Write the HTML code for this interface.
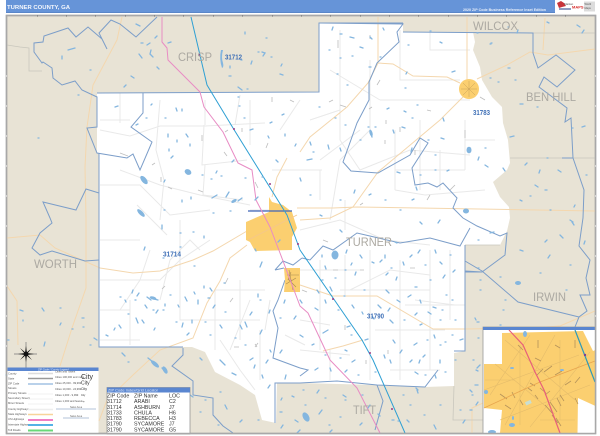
<!DOCTYPE html>
<html><head><meta charset="utf-8"><title>Turner County, GA</title>
<style>html,body{margin:0;padding:0;background:#fff;width:600px;height:436px;overflow:hidden}svg{display:block}text{font-family:"Liberation Sans",sans-serif}</style>
</head><body>
<svg width="600" height="436" viewBox="0 0 600 436" xmlns="http://www.w3.org/2000/svg">
<rect width="600" height="436" fill="#fff"/>
<!-- header -->
<rect x="6" y="0" width="549" height="12" fill="#6694d8"/>
<rect x="6" y="12" width="549" height="1" fill="#5a86c8"/>
<text x="7" y="8.8" font-size="5.6" font-weight="bold" fill="#f4f7fd" textLength="63" lengthAdjust="spacingAndGlyphs">TURNER COUNTY, GA</text>
<text x="463" y="10.8" font-size="3.6" font-weight="bold" fill="#e8effa" textLength="83" lengthAdjust="spacingAndGlyphs">2020 ZIP Code Business Reference Inset Edition</text>
<!-- logo -->
<path d="M557 3l4-2 3 2 2 3-4 1-3 1z" fill="#c8343a"/>
<path d="M559 8h12v2h-12z" fill="#8f9cc0"/>
<text x="564" y="5" font-size="3" fill="#555">Market</text>
<text x="572" y="8.6" font-size="4" font-weight="bold" fill="#d62b2b">MAPS</text>
<rect x="584" y="1.500" width="11" height="10" fill="#dcdcdc"/>
<text x="584.500" y="5" font-size="2.600" fill="#555">World</text>
<text x="584.500" y="9" font-size="2.600" fill="#555">Maps</text>
<!-- map bg -->
<rect x="6.500" y="15.500" width="589" height="418" fill="#e8e3d5" stroke="#a8a8a8" stroke-width="1.500"/>
<!-- county white -->
<path d="M97 93L319 92L319 23L403 23L403 32L473 32L475 42L473 50L480 67L482 80L492 97L502 107L503 123L508 140L510 163L507 170L493 182L500 197L509 207L510 218L507 231L500 245L465 245L465 351L454 353L454 386L425 387L377 385L300 383L277 383L276 423L262 420L255 395L240 385L215 372L205 352L192 347L99 347L99 153L97 153Z" fill="#fff"/>
<!-- minor roads -->
<g fill="none" stroke="#e9e9e9" stroke-width="1">
<path d="M100 130l30 6 30-10h45l60-3M160 100l-4 50 8 30-4 40M204 125l-2 40 45-5M205 165l-2 30 40 5M120 170l40 15 40 10 50 10M100 185h40l30 30 40-5M100 280h60l20-20 30-20M160 300l10-40 20-20 10 10M150 250l-10 30-20 30M180 260v60h40M215 290v60M215 290h50M240 280v60M250 300l-20 50M260 320h-50M220 340l20 30 15 20M260 330v50M100 340h40"/>
<path d="M340 30v110l20 30 50-20 60 5M370 60v70l-30 30-10 60M400 30v50h60M430 30v20h40M380 100h90M330 70l50 30M310 120l30-10M320 160l40-30M395 130v60M420 120v70M440 150v40M465 120v50M465 140h30M395 170h70M395 190l30 5 60-5M300 230l40-10 45 20 45 5M320 260v90M370 250v130M300 270h60M340 290h90M375 330h70M300 350l50 5M330 350v30M400 260v120M430 250v120M280 210h-30M272 170h50M320 170v30M345 200v30M350 290l40-20 40 5M405 305h60M390 370h50"/>
<path d="M100 120h30M120 93v30M137 205l30 30M100 240h40M130 300v45M180 220v40M270 300l-5 30M285 335l20 10M300 320l30 5M345 255v40M450 250v70M415 300l40 5M100 310h30M205 100v25M250 100v45M300 100l-20 30M240 95l-5 30"/>
</g>
<g fill="none" stroke="#bdbdbd" stroke-width="0.800">
<path d="M120 153l8 3M152 165l3-2M225 132l3-2M224 152l3 4M202 135v6M161 177v5M168 187l4 2M198 190l5 2M242 128v4M272 97v5M290 100l4 2M268 143l-2 5M255 182l3 6M338 40v8M370 35v4M380 80l-3 5M340 105l6 2M333 100l-4 2M372 107l-3 2M400 127v5M385 140v4M386 120v4M415 150v5M465 130v8M427 110l4 1M455 185l-5 5M480 97l5 3M430 195l-3 5M323 240l5 2M333 270h5M360 270h4M345 325v5M366 360v4M388 350v4M258 343l-3 4M234 347h5M162 289l3-3M225 284l3-6M230 302l3-4M255 344l2 3M302 290l5 2M360 205l3-2M410 268h5"/>
</g>
<!-- highways -->
<g fill="none" stroke="#f4d7ae" stroke-width="1">
<path d="M122 17L117 40L93 85L87 127L85 167L86 218L86 261L86 288L72 328L60 366"/>
<path d="M7 238L40 235L55 248L100 268L133 273L160 271L193 260L213 251L247 231"/>
<path d="M7 286L17 301L18 345"/>
<path d="M247 245L230 258L220 281L207 303L193 338L160 350L133 375L107 400L99 421"/>
<path d="M467 17L467 80M477 79L507 65L530 52L548 55L595 49"/>
<path d="M300 152L310 137L347 107L368 83L378 63L393 64L413 76L447 77L460 83"/>
<path d="M463 97L440 120L378 172L353 207L330 218L300 220"/>
<path d="M297 208L333 208L357 207L595 211"/>
<path d="M378 17V63M545 18L543 50"/>
<path d="M300 285L333 296L377 296L433 329L463 329L533 328L560 326L595 311"/>
<path d="M323 351L343 346L363 340M472 433V408L483 403"/>
<path d="M287 158L277 177L272 197"/>
</g>
<!-- county & zip lines -->
<g fill="none" stroke="#c9c7bd" stroke-width="0.800">
<path d="M7 45L20 47L29 48L29 71L42 71"/>
<path d="M533 33H595M510 158H595"/>
<path d="M465 245H500M454 386L453 420H483"/>
</g>
<g fill="none" stroke="#7c9ec9" stroke-width="1">
<path d="M157 17L136 37L120 24L111 20L99 33L107 49L102 39L88 27L76 37L68 28L44 36L43 42L34 43L34 52L42 63L43 62L52 68L53 78L62 85L75 81L82 90L97 97L97 127L87 128L97 153L127 158L133 154L140 170L152 142L131 127L143 113V93"/>
<path d="M99 193L86 189L76 210L43 202L50 218L52 223L40 233L32 248L40 255L52 251L85 261L99 260"/>
<path d="M183 348V355L172 366L193 381V395L213 398V415L223 426L233 433"/>
<path d="M319 23L403 24L397 32L399 42L377 63L369 82V100L357 123L343 162L351 171L378 173L410 155L420 138L428 143L412 168L415 185L428 183L437 187L443 183L457 198L453 208L463 218L477 226L500 236L507 233L505 255L482 272L465 271"/>
<path d="M403 32L533 33V53L538 68L556 55L575 70L557 87L544 77L539 87L567 108L565 122L571 118L573 158H562M573 158L584 190L583 218L579 246L590 260L586 278L590 295L580 295L587 311L579 317L575 327"/>
<path d="M579 317L518 302L482 271L465 261M465 272H482"/>
<path d="M302 258L310 260L323 246L333 250L357 233L400 243L430 238L460 246L470 228"/>
<path d="M300 383L337 381L377 385L425 387L438 370"/>
<path d="M377 385L383 401L375 430M300 368L308 370L300 376"/>
<path d="M275 423V383H300M275 270L283 261L293 265L302 258M275 270L284 268M285 280L278 300L273 311L278 328L273 358L300 368"/>
</g>
<path d="M97 93L319 92L319 23L403 23M99 153V347H183M465 245V351H454" fill="none" stroke="#7c9ec9" stroke-width="1"/>
<!-- places -->
<path d="M269 197L272 202L283 205L292 212L297 228L292 237V250L255 251L250 242L246 240V222L269 212Z" fill="#fbcf70"/>
<path d="M284 268H300V292H284L285 280Z" fill="#fbcf70"/>
<circle cx="469" cy="89" r="10" fill="#fbcf70"/>
<path d="M463 83l12 12M475 83l-12 12M461 89h16M469 81v16" stroke="#c9a35a" stroke-width="0.500" fill="none"/>
<path d="M287 275h12M289 270l4 20M286 284l10-6M288 279l8 8M291 272l-3 8" stroke="#a88a52" stroke-width="0.600" fill="none"/>
<path d="M248 240L297 215" stroke="#f4c68c" stroke-width="0.800"/>
<path d="M248 211H292" stroke="#3f63b8" stroke-width="1.300"/>
<!-- pink + teal highways -->
<g fill="none" stroke-linejoin="round">
<path d="M162 17V42L167 48L168 60L200 92L204 107L223 132L238 163L252 170L256 200L270 227L280 253L300 306L308 313L330 360L357 388L380 433" stroke="#e88cc4" stroke-width="1"/>
<path d="M191 17L207 85L233 128L287 215L300 250L362 340L373 360L405 433" stroke="#2e9fd3" stroke-width="1"/>
</g>
<g fill="#9a3b86"><circle cx="199" cy="55" r="1"/><circle cx="234" cy="129" r="1"/><circle cx="270" cy="184" r="1"/><circle cx="298" cy="244" r="1"/><circle cx="333" cy="299" r="1"/><circle cx="370" cy="353" r="1"/><circle cx="392" cy="409" r="1"/></g>
<!-- water -->
<g fill="none" stroke="#84b6df" stroke-width="1.300" stroke-linecap="round">
<path d="M136 24l4 2M68 50l7-2M62 56v3M90 70h1M131 76l3 2M124 87l2-2M139 54l3 4M151 50l-1 4 3 3M147 45l3-2M155 38l2-2M168 43l3-1M141 43h2M157 67l2 2M230 66v2M241 60h1M245 32v2M266 38h1M258 52h1M262 52l3 1-2 3M271 57h1M252 61l-1 3M282 64l-1 2M280 74l3 1M238 87l4 3M229 76h2M247 89h1M78 95h1M38 138h1"/>
<path d="M115 107l3-1M151 105l1-1M176 108l1 3M182 109v2M165 118h1M146 118h1M136 125l2-1M168 134v3M186 134l2 3M190 144v2M177 140v2M169 149v2M173 156l-2 2M211 179h1M221 176h1M245 178h1M262 177h1M164 182l1-2M212 198l5-3M229 192l-3 5M238 201l4-3M258 197l-3 3M191 197v2M182 200v2M138 210l5 5M164 210h1M238 97h1M239 106h1M244 118h1M250 130l3-1M268 136l1 2M282 115l2-1M285 134v2M295 146l1-2M270 123l2-1M216 173l1-2M234 160l-2 2M202 175h1M213 213h1M230 211h1M180 233h1M193 232h1M162 225v4M144 250l1-3M163 258h1M180 247h1M194 266h1M204 236v2"/>
<path d="M133 290l-1 3M137 296l2-3M120 297h1M135 300h1M147 297l4 3M154 299l4 1M153 310h1M163 310h1M165 306v-2M185 297l2 4M194 292l1 2M198 300v4M204 286v2M210 288l2 3M208 298h2M215 305l-2 3M224 283h1M119 325l2 3M114 330l1-2M128 314h1M136 318l2 5M158 310l-2 3M183 323l-1 4M176 322h1M192 320v3M187 335l2-2M205 322h1M225 312h1M245 322l2 5M250 315l2-3M258 297v-3M262 262l-2 5M280 240l-2 2M255 249l1 2M260 300h1M270 310l-1 3M280 318h1M220 360l5 5M232 373l4 2M255 365l-1 3M268 360l-2 3M262 330l-2 4M240 325l2 4M235 338h1M286 375l-1 4M296 316l-2 3M285 300l-1 3"/>
<path d="M333 27l-1 3M340 34h2M350 37l4 1M370 37l2 2M383 28l1 2M360 47l3 1M352 56h1M340 58h1M329 50h1M380 57h1M369 67h2M407 72l-1 2M337 74h1M440 42l2 1M452 72l3-1M430 31h1M408 45h1M405 88h1M347 85h1M319 107h1M335 118h1M404 111l2 1M387 109l2-1M368 127h1M428 140h1M393 130l1 3M443 118l1 3M417 105h1M412 118h1M375 127h1M405 128l-3-1M372 134l-2-3M310 142l1 3M328 145l1 4M340 148l1 3M307 160l5-1M360 140h1M371 134l1 3M412 148l-1 4M435 155h1M447 171l2-1M478 160l1-3M485 165l3 2M485 148h1M435 170h1M420 175h1M397 172l3 1M416 187l1 3M369 195l2-1M313 152h1M345 125h1M441 138l3 1"/>
<path d="M491 43h1M490 78h1M508 68h2M515 80h1M498 82h1M508 27h1M477 33h1M490 44h1M518 30l-1 3M547 22l2 1M577 25l3 2M584 30l-2 3M520 104h3M537 107h1M582 127l3-1M572 128h1M510 137l4-1M525 165l2-2M503 168l2 3M540 170l-1 3M535 185l3 2M547 158h1M558 170l3 2M586 175h1M520 200l2 1M575 205l-1 2M545 190h2M530 196h1M550 210h1M570 220l3 2M478 240h1M520 250l3 1M550 255l-2 3M478 268h1M545 242l2-2M480 290h1M480 280h1M560 235l3 3M572 222l2 3M585 241l-1 3M540 273h1M500 277h1M570 265h1M505 300h1M566 290h1"/>
<path d="M478 338h1M473 360h1M476 370l2 1M477 322h2M500 325h1M503 310h1M475 318l1 2M490 233l4-1M300 300l2 3M460 340l3-1M347 250l-1 3M322 255v2M340 230l2 2M385 255v3M395 242l2 1M420 250l-2 3M435 250l1 3M345 270h1M356 272l-1 3M380 262l2-2M386 275l2-2M397 277l-1 3M322 280h1M317 290l2 3M330 287l2 4M344 296h1M364 290h1M386 290l3 3M397 300l3 2M415 287h2M430 280h1M446 295h1M452 300h1M445 275l-2 3M390 320l3 3M404 320h1M372 316l2 3M420 325l2-1M440 320h1M455 320h1M433 307l3 1M420 300l1 3M408 297l3-2M328 330l-5 3M347 327l3-1M351 335h1M365 340l3-1M414 345l3-2M427 340h1M440 345h1M425 355l-2 2M402 350l-2 3M384 355l1 3M355 360l-3 2M420 360l-1 3M440 360v3M340 358h1M325 355h1M345 350l2 1M393 340l2 3M445 342h1M455 360h1M425 375h1M435 375l1 3"/>
<path d="M303 390h1M317 393l2-3M325 398h1M343 395l3 2M322 410l-3 4M340 417h1M362 395h1M370 405l-2 3M345 400h1M305 405h1M329 425h1M330 432l2-2M360 425l2-2M403 395h1M417 390l1 3M424 415h1M434 425l2 4M398 421h1M410 405h1M440 405h1M470 410h2M478 402l-2 3M490 352l-1 3M480 365l-3 3M478 385h-3M470 390l2 2M472 395h1M460 410h1M465 420l-2 3M380 416l-2-2M407 420l2 2M416 388l2 2M392 420h2"/>
<path d="M148 358l5 4M162 368l4 5M106 335l2 1M7 340h2M45 342l-1 4M6 375h1M44 311l-2-3M60 308h1M83 327h1M20 310l3 1M23 320v1M82 318h2M72 329h1M94 338l3 2M122 353l3 3M128 362h1M200 358l2 2M225 405l2 4M200 412h1M218 425h1M205 400h1M220 392h1M190 395l3 2M258 420h1M240 422l2-2M300 430l-3 3M292 396l2 1M282 398l-1 2M280 412h2M295 420l3 2M283 425l-2 3M36 400h1M85 375h1M90 345h1M60 325l1-2"/>
<path d="M325 266l1 3M335 278h1M352 263l-1 2M360 255l2 3M372 262l2 1M391 268h1M403 262l1 3M412 255l-2 2M425 265h1M440 262l2 2M450 255h1M455 270l-2 2M315 308l3 2M325 300l1 3M338 310h1M352 305l2 3M362 312l1 2M378 305l3 3M390 308l-2 3M415 315l2-2M428 312l3 2M442 310h1M452 335h1M434 335l1 3M390 360l1 3M410 362l2-2M375 372h1M345 372l2-2M358 375h1M415 372l3 2M445 372h1M300 335l3 2M312 345l2-1M315 370l3-2M330 368l1 3M125 300l1 2M145 305l2 3M170 295h1M178 305l1 2M142 320l2 3M155 328l-1 2M210 335h1M220 325l2 3M270 350l1 2M282 350l-2 3M245 345h1M250 360l3-2M262 375l1 3M270 385l-2 3M340 200h1M355 190l-1 3M385 200h1M400 210h1M412 200l2-1M420 222l2 2M440 220l-2 3M310 195h1M320 215l2 1M300 178l1 3M276 160l2 2"/>
</g>
<g fill="#84b6df" stroke="none">
<ellipse cx="188" cy="172" rx="3.500" ry="2.700" transform="rotate(30 188 172)"/>
<ellipse cx="144" cy="180" rx="2.500" ry="5" transform="rotate(-40 144 180)"/>
<ellipse cx="141" cy="213" rx="2" ry="5" transform="rotate(-45 141 213)"/>
<path d="M221 50q-2 9 1 18 2-1 1-5-2-6 0-13z"/>
<ellipse cx="234" cy="201" rx="3" ry="1.500" transform="rotate(-30 234 201)"/>
<ellipse cx="469" cy="150" rx="2.500" ry="3.300"/>
<ellipse cx="335" cy="255" rx="3.500" ry="4.500"/>
<ellipse cx="371" cy="133" rx="1.500" ry="3.500" transform="rotate(-15 371 133)"/>
<ellipse cx="466" cy="211" rx="3" ry="2.500"/>
<ellipse cx="518" cy="283" rx="3" ry="2"/>
<ellipse cx="155" cy="364" rx="5" ry="2" transform="rotate(40 155 364)"/>
<ellipse cx="165" cy="370" rx="2" ry="4" transform="rotate(-30 165 370)"/>
<ellipse cx="153" cy="298" rx="3.500" ry="1.500" transform="rotate(15 153 298)"/>
<ellipse cx="306" cy="417" rx="3" ry="5" transform="rotate(-30 306 417)"/>
</g>
<!-- labels -->
<g fill="#aca9a2" font-size="12">
<text x="178" y="61" textLength="34" lengthAdjust="spacingAndGlyphs">CRISP</text>
<text x="473" y="30" textLength="45" lengthAdjust="spacingAndGlyphs">WILCOX</text>
<text x="526" y="101" textLength="50" lengthAdjust="spacingAndGlyphs">BEN HILL</text>
<text x="346" y="246" textLength="46" lengthAdjust="spacingAndGlyphs">TURNER</text>
<text x="34" y="268" textLength="43" lengthAdjust="spacingAndGlyphs">WORTH</text>
<text x="533" y="301" textLength="33" lengthAdjust="spacingAndGlyphs">IRWIN</text>
<text x="353" y="414" textLength="23" lengthAdjust="spacingAndGlyphs">TIFT</text>
</g>
<g fill="#3e6fb6" font-size="7" font-weight="bold">
<text x="225" y="59.500" textLength="17" lengthAdjust="spacingAndGlyphs">31712</text>
<text x="473" y="115" textLength="17" lengthAdjust="spacingAndGlyphs">31783</text>
<text x="163" y="256.500" textLength="18" lengthAdjust="spacingAndGlyphs">31714</text>
<text x="367" y="318.500" textLength="17" lengthAdjust="spacingAndGlyphs">31790</text>
</g>
<!-- compass -->
<path d="M26 342v26M14 354h23" stroke="#777" stroke-width="0.700"/>
<g fill="#111"><path d="M26 346l1 7h-2zM26 362l-1-7h2zM18 354l7-1v2zM34 354l-7 1v-2zM20 348l6 5-1 1zM32 360l-6-5 1-1zM32 348l-5 6-1-1zM20 360l5-6 1 1z"/><circle cx="26" cy="354" r="2.200"/></g>
<!-- inset map -->
<rect x="483" y="327" width="112.500" height="106.500" fill="#fff" stroke="#9a9a9a" stroke-width="0.800"/>
<path d="M502 333L583 331L593 351L595.500 350V406L578 398L577.500 433L500 433L502 410L484 408L484 364L502 364Z" fill="#fbcf70"/>
<rect x="483" y="327" width="113" height="3" fill="#5a86d0"/>
<g fill="none" stroke="#e4bc6b" stroke-width="0.600">
<path d="M495 364l60 50M505 340l70 60M530 335l-40 60M555 335l-50 90M590 352l-60 75M484 390l95-35M500 420l90-35M520 345v80M560 340v80M485 380h30M540 420h35"/>
</g>
<g fill="none" stroke="#b5935a" stroke-width="0.800">
<path d="M537 375l6-6M544 372l8-6M555 375l7-4M540 388l6 5M530 383l5 3M500 394l7 5M505 405l6 4M512 392l3 6M520 400l3 5M545 405l7 8M550 402l7 10M557 398l4 8M565 385l6-4M575 383l5-6M575 398l3 6M518 345l5 5M538 340v8M555 345l5 3M575 340v8M535 358l6 3M560 395l4 6M545 395l5-4M535 395l3 4M528 388l4 3M552 415l6 8M556 418l5 8"/>
</g>
<path d="M484 408L540 382L595 361" stroke="#e8a54e" stroke-width="0.800" fill="none"/>
<path d="M509 330L523 345L535 372L544 390L560 433" stroke="#e8607a" stroke-width="1.200" fill="none"/>
<path d="M575 330L595 382" stroke="#2f9ab8" stroke-width="1.200" fill="none"/>
<circle cx="585" cy="355" r="1.200" fill="#7a3d96"/>
<rect x="525" y="401" width="6" height="3.500" fill="#c9dfd2" transform="rotate(-25 528 402)"/>
<g fill="#84b6df"><ellipse cx="525" cy="334" rx="2" ry="3"/><ellipse cx="486" cy="392" rx="2" ry="2"/><ellipse cx="512" cy="425" rx="3" ry="2"/><ellipse cx="512" cy="368" rx="2" ry="1"/><ellipse cx="562" cy="370" rx="2" ry="1"/><ellipse cx="492" cy="432" rx="4" ry="2"/><ellipse cx="513" cy="418" rx="1" ry="2"/></g>
<!-- legend -->
<rect x="7.500" y="368" width="91" height="65.500" fill="#fff"/>
<rect x="7.500" y="367.500" width="91" height="3.500" fill="#5a86d0"/>
<text x="38" y="370.500" font-size="2.600" fill="#e8effa">ZIP Code / County Legend</text>
<g font-size="2.700" fill="#555">
<text x="8" y="374.500">County</text><text x="8" y="379.500">State</text><text x="8" y="384.500">ZIP Code</text><text x="8" y="389">Streets</text><text x="8" y="394">Primary Streets</text><text x="8" y="399">Secondary Streets</text><text x="8" y="404">Minor Streets</text><text x="8" y="410">County Highways</text><text x="8" y="415">State Highways</text><text x="8" y="420">US Highways</text><text x="8" y="425.500">Interstate Highways</text><text x="8" y="431">Toll Roads</text>
<text x="55" y="372.500">Cities and Towns</text><text x="55" y="378">Cities 100,000 and more</text><text x="55" y="384">Cities 25,000 - 99,999</text><text x="55" y="390">Cities 10,000 - 24,999</text><text x="55" y="396">Cities 1,000 - 9,999</text><text x="55" y="402">Cities 1,000 and fewer</text>
</g>
<g fill="#333"><text x="81" y="379" font-size="7">City</text><text x="81" y="384.500" font-size="5">City</text><text x="81" y="390" font-size="3.500">City</text><text x="81" y="396" font-size="2.500">City</text><text x="81" y="402" font-size="2">City</text></g>
<g fill="none">
<path d="M28 373.500H53" stroke="#ddd" stroke-width="1.500"/><path d="M28 378.500H53" stroke="#999" stroke-width="1.500"/><path d="M28 384H53" stroke="#b9d1ea" stroke-width="2"/>
<path d="M28 394H53M28 399H53M28 404H53" stroke="#f0f0f0"/>
<path d="M28 409.500H53" stroke="#eee" stroke-width="1.500"/><path d="M28 414.500H53" stroke="#f8d49a" stroke-width="1.500"/><path d="M28 420H53" stroke="#f07ec4" stroke-width="2"/><path d="M28 425H53" stroke="#54b2e6" stroke-width="2"/><path d="M28 430.500H53" stroke="#68d878" stroke-width="2"/>
<path d="M56 409H96M63 418H89" stroke="#9bb0cc" stroke-width="0.800"/>
</g>
<text x="70" y="408" font-size="2.500" fill="#666">Sales Area</text>
<text x="70" y="417" font-size="2.500" fill="#666">Sales Area</text>
<!-- index table -->
<rect x="107" y="387.500" width="83" height="46.500" fill="#fff" stroke="#8a8a8a" stroke-width="0.700"/>
<rect x="107" y="387.500" width="83" height="5" fill="#5a86d0"/>
<text x="108" y="391.300" font-size="3.700" fill="#dfe8f8" textLength="50" lengthAdjust="spacingAndGlyphs">ZIP Code Index/Grid Locator</text>
<g font-size="5.300" fill="#333">
<text x="107" y="397.500">ZIP Code</text><text x="134" y="397.500">ZIP Name</text><text x="169" y="397.500">LOC</text>
<text x="107" y="403">31712</text><text x="134" y="403">ARABI</text><text x="169" y="403">C2</text>
<text x="107" y="408.800">31714</text><text x="134" y="408.800">ASHBURN</text><text x="169" y="408.800">J7</text>
<text x="107" y="414.300">31733</text><text x="134" y="414.300">CHULA</text><text x="169" y="414.300">H6</text>
<text x="107" y="420">31783</text><text x="134" y="420">REBECCA</text><text x="169" y="420">H3</text>
<text x="107" y="425.700">31790</text><text x="134" y="425.700">SYCAMORE</text><text x="169" y="425.700">J7</text>
<text x="107" y="431.400">31790</text><text x="134" y="431.400">SYCAMORE</text><text x="169" y="431.400">G5</text>
</g>
<!-- frame overlay with ticks -->
<rect x="6.500" y="15.500" width="589" height="418" fill="none" stroke="#a8a8a8" stroke-width="1.500"/>
<g stroke="#666" stroke-width="1"><path d="M37 16h1M66 16h1M95 16h1M125 16h1M154 16h1M183 16h1M213 16h1M242 16h1M272 16h1M301 16h1M330 16h1M360 16h1M389 16h1M418 16h1M448 16h1M477 16h1M506 16h1M536 16h1M565 16h1"/></g>
<g stroke="#fff" stroke-width="1"><path d="M6 76h1M6 106h1M6 136h1M6 166h1M6 196h1M6 226h1M6 256h1M6 286h1M6 316h1M6 346h1M595 76h1M595 106h1M595 136h1M595 166h1M595 196h1M595 226h1M595 256h1M595 286h1M595 316h1"/></g>
</svg>
</body></html>
